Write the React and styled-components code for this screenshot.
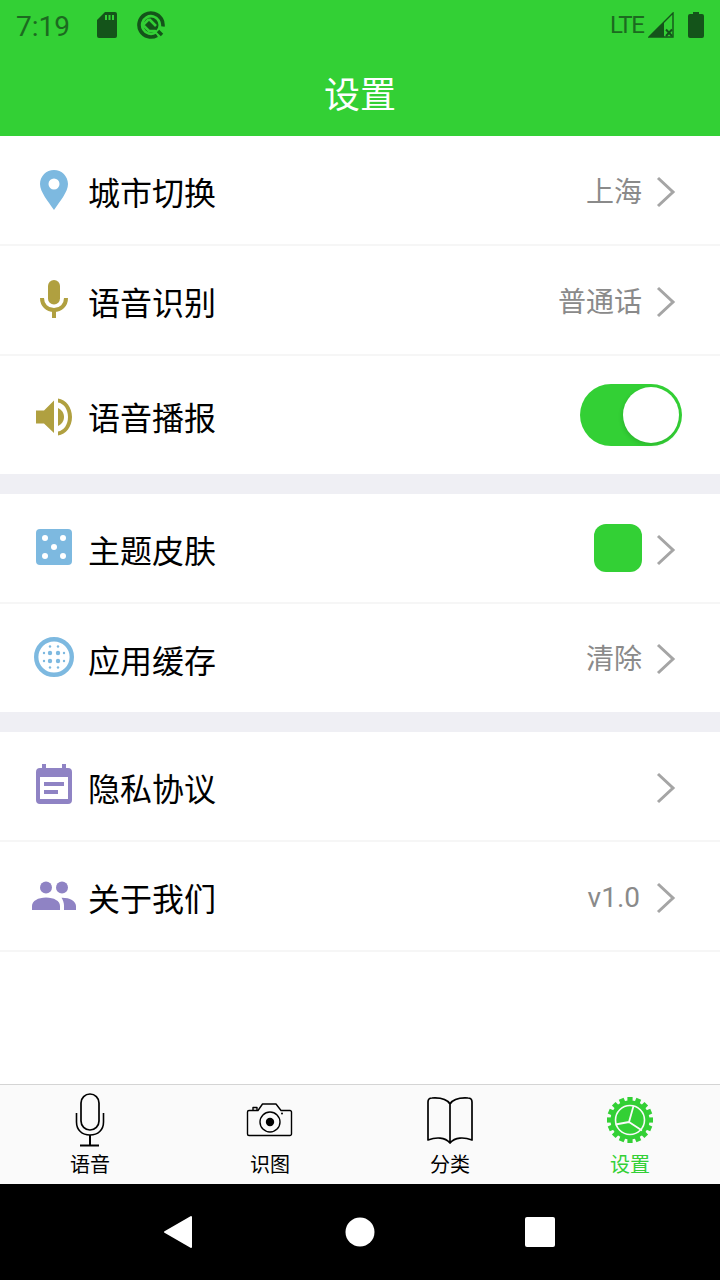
import React from 'react';
import styled, { createGlobalStyle } from 'styled-components';

const GREEN = '#33d035';
const BLUE = '#7db9e0';
const OLIVE = '#b0a040';
const PURPLE = '#8f83c4';
const STATUS = '#14541a';
const CJK = '"Noto Sans CJK SC", "Noto Sans", sans-serif';

const GlobalStyle = createGlobalStyle`
  html, body {
    margin: 0;
    padding: 0;
    background: #fff;
  }
  * {
    box-sizing: border-box;
  }
`;

const Screen = styled.div`
  width: 720px;
  height: 1280px;
  display: flex;
  flex-direction: column;
  background: #fff;
  font-family: ${CJK};
  overflow: hidden;
`;

const StatusBar = styled.div`
  height: 56px;
  flex: none;
  display: flex;
  align-items: center;
  padding: 0 16px;
  background: ${GREEN};
  color: #1c6a20;
`;

const Time = styled.span`
  font-family: Roboto, sans-serif;
  font-size: 28px;
  line-height: 50px;
  width: 81px;
  margin-top: -2px;
`;

const StatusIcon = styled.svg`
  display: block;
  flex: none;
  margin-top: -6px;
  margin-left: ${(p) => p.$left || 0}px;
`;

const Network = styled.span`
  font-family: Roboto, sans-serif;
  font-size: 24px;
  letter-spacing: -1.4px;
  line-height: 50px;
  margin-left: auto;
  margin-top: -6px;
  width: 38px;
`;

const Header = styled.div`
  height: 80px;
  flex: none;
  display: flex;
  align-items: center;
  justify-content: center;
  background: ${GREEN};
  color: #fff;
  font-size: 36px;
  padding-bottom: 9px;
`;

const Content = styled.div`
  flex: 1;
  display: flex;
  flex-direction: column;
`;

const Group = styled.div`
  display: flex;
  flex-direction: column;
`;

const Gap = styled.div`
  height: 20px;
  background: #efeff4;
`;

const Row = styled.div`
  height: ${(p) => p.$height || 110}px;
  display: flex;
  align-items: center;
  padding: 0 44px 0 32px;
  border-bottom: 2px solid ${(p) => (p.$plain ? 'transparent' : '#f6f6f6')};
`;

const IconSlot = styled.div`
  width: 44px;
  flex: none;
  display: flex;
  justify-content: center;
  margin-top: ${(p) => p.$shift || 0}px;

  svg {
    display: block;
  }
`;

const Label = styled.span`
  margin-left: 12px;
  font-size: 32px;
  line-height: 44px;
  color: #000;
  padding-top: ${(p) => p.$drop ?? 2}px;
`;

const Side = styled.div`
  margin-left: auto;
  display: flex;
  align-items: center;
`;

const Value = styled.span`
  font-family: ${(p) => (p.$latin ? 'Roboto, sans-serif' : CJK)};
  font-size: 28px;
  line-height: 40px;
  color: #8a8a8a;
  margin-right: ${(p) => (p.$latin ? 2 : 0)}px;
  margin-top: ${(p) => (p.$latin ? 4 : 0)}px;
`;

const Chevron = styled.svg`
  display: block;
  margin-left: 14px;
  margin-top: 4px;
`;

const Swatch = styled.div`
  width: 48px;
  height: 48px;
  border-radius: 12px;
  background: ${GREEN};
`;

const Toggle = styled.div`
  width: 102px;
  height: 62px;
  margin-right: -6px;
  margin-top: 2px;
  padding: 3px;
  display: flex;
  justify-content: flex-end;
  border-radius: 31px;
  background: ${GREEN};
`;

const Knob = styled.div`
  width: 56px;
  height: 56px;
  border-radius: 50%;
  background: #fff;
  box-shadow: -1px 2px 4px rgba(0, 0, 0, 0.12);
`;

const TabBar = styled.div`
  height: 100px;
  flex: none;
  display: grid;
  grid-template-columns: repeat(4, 1fr);
  background: #fafafa;
  border-top: 1px solid #d4d4d4;
`;

const Tab = styled.div`
  display: flex;
  flex-direction: column;
  align-items: center;
  color: ${(p) => (p.$active ? GREEN : '#000')};
`;

const TabIcon = styled.svg`
  display: block;
  width: 60px;
  height: 65px;
  flex: none;
`;

const TabLabel = styled.span`
  font-size: 20px;
  line-height: 28px;
`;

const NavBar = styled.div`
  height: 96px;
  flex: none;
  background: #000;
  display: flex;
  align-items: center;
  justify-content: center;
  gap: 150px;
`;

const NavIcon = styled.svg`
  display: block;
  overflow: visible;
`;

const ArrowRight = () => (
  <Chevron width="20" height="32" viewBox="0 0 20 32">
    <path d="M2 2 L17 16 L2 30" fill="none" stroke="#a5a5a5" strokeWidth="3" />
  </Chevron>
);

const SdCard = () => (
  <StatusIcon $left={0} width="20" height="26" viewBox="0 0 20 26">
    <path
      fill={STATUS}
      fillRule="evenodd"
      d="M8 0 H18 a2 2 0 0 1 2 2 V24 a2 2 0 0 1 -2 2 H2 a2 2 0 0 1 -2 -2 V8 Z M8 3 V8 H10 V3 Z M11.5 3 V8 H13.5 V3 Z M15 3 V8 H17 V3 Z"
    />
  </StatusIcon>
);

const QLogo = () => (
  <StatusIcon $left={20} width="28" height="28" viewBox="0 0 28 28">
    <circle cx="14" cy="14" r="12" fill="none" stroke={STATUS} strokeWidth="3.6" strokeDasharray="64 11.4" transform="rotate(60 14 14)" />
    <circle cx="14" cy="14" r="7.5" fill={STATUS} />
    <path d="M12 8 L6 14 L12 20 L18 20 L24 26 M12 8 L19 15" fill="none" stroke={GREEN} strokeWidth="2.6" />
    <path d="M21 20 L25 24" stroke={STATUS} strokeWidth="3.4" />
  </StatusIcon>
);

const Signal = () => (
  <StatusIcon $left={0} width="26" height="26" viewBox="0 0 26 26">
    <path d="M25 1 V25 H1 Z" fill="none" stroke={STATUS} strokeWidth="1.4" />
    <path d="M1 25 L16 10 V25 Z" fill={STATUS} />
    <path d="M18 17.5 L24 24 M24 17.5 L18 24" stroke={STATUS} strokeWidth="2" />
  </StatusIcon>
);

const Battery = () => (
  <StatusIcon $left={14} width="16" height="26" viewBox="0 0 16 26">
    <path fill={STATUS} d="M5 0 H11 V2 H14 a2 2 0 0 1 2 2 V24 a2 2 0 0 1 -2 2 H2 a2 2 0 0 1 -2 -2 V4 a2 2 0 0 1 2 -2 H5 Z" />
  </StatusIcon>
);

const PinIcon = () => (
  <svg width="28" height="40" viewBox="0 0 28 40">
    <path
      fill={BLUE}
      fillRule="evenodd"
      d="M14 0 C6.3 0 0 6.2 0 14 C0 22 8 31 14 40 C20 31 28 22 28 14 C28 6.2 21.7 0 14 0 Z M14 8.5 a5.5 5.5 0 1 1 0 11 a5.5 5.5 0 1 1 0 -11 Z"
    />
  </svg>
);

const MicIcon = () => (
  <svg width="28" height="38" viewBox="0 0 28 38">
    <rect x="8" y="0" width="12" height="24.5" rx="6" fill={OLIVE} />
    <path d="M2 18 C2 25 7 30 14 30 C21 30 26 25 26 18" fill="none" stroke={OLIVE} strokeWidth="4" />
    <rect x="12" y="29" width="4" height="9" fill={OLIVE} />
  </svg>
);

const SpeakerIcon = () => (
  <svg width="36" height="38" viewBox="0 0 36 38">
    <path fill={OLIVE} d="M0 12.5 H8 L18 2.5 V35 L8 25.5 H0 Z" />
    <path fill={OLIVE} d="M22 0.5 C30 1.5 36 9.5 36 19 C36 28.5 30 36.5 22 37.5 V33.5 C28 32.5 32 26.5 32 19 C32 11.5 28 5.5 22 4.5 Z" />
    <path fill={OLIVE} d="M22 10 C25.5 11.5 28 15 28 19 C28 23 25.5 26.5 22 28 Z" />
  </svg>
);

const DiceIcon = () => (
  <svg width="36" height="36" viewBox="0 0 36 36">
    <rect width="36" height="36" rx="4" fill={BLUE} />
    {[[9, 9], [27, 9], [18, 18], [9, 27], [27, 27]].map(([x, y]) => (
      <circle key={`${x}-${y}`} cx={x} cy={y} r="3" fill="#fff" />
    ))}
  </svg>
);

const CacheIcon = () => (
  <svg width="40" height="40" viewBox="0 0 40 40">
    <circle cx="20" cy="20" r="17.8" fill="none" stroke={BLUE} strokeWidth="4.4" />
    {[[16, 16], [24, 16], [16, 24], [24, 24]].map(([x, y]) => (
      <circle key={`${x}-${y}`} cx={x} cy={y} r="2.2" fill={BLUE} />
    ))}
    {[[16, 9.5], [24, 9.5], [16, 30.5], [24, 30.5], [10, 16], [10, 24], [30, 16], [30, 24]].map(([x, y]) => (
      <circle key={`${x}-${y}`} cx={x} cy={y} r="1.2" fill={BLUE} />
    ))}
  </svg>
);

const CalendarIcon = () => (
  <svg width="36" height="40" viewBox="0 0 36 40">
    <path
      fill={PURPLE}
      fillRule="evenodd"
      d="M6 0 H10 V4 H26 V0 H30 V4 H32 a4 4 0 0 1 4 4 V36 a4 4 0 0 1 -4 4 H4 a4 4 0 0 1 -4 -4 V8 a4 4 0 0 1 4 -4 H6 Z M4 13 V35 H32 V13 Z"
    />
    <rect x="8" y="18" width="20" height="4" fill={PURPLE} />
    <rect x="8" y="26" width="14" height="4" fill={PURPLE} />
  </svg>
);

const PeopleIcon = () => (
  <svg width="44" height="30" viewBox="0 0 44 30">
    <circle cx="14" cy="6.5" r="6" fill={PURPLE} />
    <circle cx="30" cy="6.5" r="6" fill={PURPLE} />
    <path fill={PURPLE} d="M0 29 V25 C0 20 6 16.5 14 16.5 C22 16.5 28 20 28 25 V29 Z" />
    <path fill={PURPLE} d="M29.5 16.7 C37.5 16.5 44 20 44 25 V29 H32 V24.5 C32 21.5 31 19 29.5 16.7 Z" />
  </svg>
);

const TabMic = () => (
  <TabIcon viewBox="0 0 60 65">
    <g fill="none" stroke="currentColor" strokeWidth="2">
      <rect x="21" y="9" width="18" height="36" rx="9" strokeWidth="1.7" />
      <path d="M16.5 28 V37 C16.5 45 22 50 30 50 C38 50 43.5 45 43.5 37 V28" strokeWidth="1.6" />
      <path d="M30 50 V60 M20 60.5 H39" />
    </g>
  </TabIcon>
);

const TabCamera = () => (
  <TabIcon viewBox="0 0 60 65">
    <g fill="none" stroke="currentColor" strokeWidth="1.4" strokeLinejoin="round">
      <path d="M9 25.5 H18 L22.5 19 H36 L41 25.5 H50 a1.5 1.5 0 0 1 1.5 1.5 V49 a1.5 1.5 0 0 1 -1.5 1.5 H9 a1.5 1.5 0 0 1 -1.5 -1.5 V27 a1.5 1.5 0 0 1 1.5 -1.5 Z" />
      <circle cx="30" cy="37" r="10" />
      <path d="M13 25 V22.5 H17 V25" />
    </g>
    <circle cx="30" cy="37" r="4.2" fill="currentColor" />
    <circle cx="42" cy="28.5" r="1" fill="currentColor" />
  </TabIcon>
);

const TabBook = () => (
  <TabIcon viewBox="0 0 60 65">
    <path
      d="M30 19 C27 14 20 12.5 12 13 C9 13 8 14.5 8 17 V55 C16 52 25 52 30 58 C35 52 44 52 52 55 V17 C52 14.5 51 13 48 13 C40 12.5 33 14 30 19 Z M30 19 V57"
      fill="none"
      stroke="currentColor"
      strokeWidth="1.7"
      strokeLinejoin="round"
    />
  </TabIcon>
);

// gear teeth are spaced evenly round the wheel
const TEETH = Array.from({ length: 16 }, (_, i) => i * 22.5);

const TabGear = () => (
  <TabIcon viewBox="0 0 60 65">
    <g transform="translate(30 35)">
      <circle r="19.5" fill="currentColor" />
      {TEETH.map((a) => (
        <rect key={a} x="-2.6" y="-23" width="5.2" height="6" fill="currentColor" transform={`rotate(${a})`} />
      ))}
      <circle r="14.5" fill="none" stroke="#fafafa" strokeWidth="1.6" />
      <path d="M-1 2 L3.5 -14 M-1 2 L-14.5 4.5 M-1 2 L12 10.5" fill="none" stroke="#fafafa" strokeWidth="1.8" />
    </g>
  </TabIcon>
);

const NAV_TABS = [
  { label: '语音', icon: <TabMic /> },
  { label: '识图', icon: <TabCamera /> },
  { label: '分类', icon: <TabBook /> },
  { label: '设置', icon: <TabGear />, active: true },
];

export default function App() {
  return (
    <Screen>
      <GlobalStyle />
      <StatusBar>
        <Time>7:19</Time>
        <SdCard />
        <QLogo />
        <Network>LTE</Network>
        <Signal />
        <Battery />
      </StatusBar>
      <Header>设置</Header>

      <Content>
        <Group>
          <Row>
            <IconSlot><PinIcon /></IconSlot>
            <Label>城市切换</Label>
            <Side>
              <Value>上海</Value>
              <ArrowRight />
            </Side>
          </Row>
          <Row>
            <IconSlot $shift={-2}><MicIcon /></IconSlot>
            <Label>语音识别</Label>
            <Side>
              <Value>普通话</Value>
              <ArrowRight />
            </Side>
          </Row>
          <Row $height={118} $plain>
            <IconSlot $shift={6}><SpeakerIcon /></IconSlot>
            <Label $drop={4}>语音播报</Label>
            <Side>
              <Toggle>
                <Knob />
              </Toggle>
            </Side>
          </Row>
        </Group>
        <Gap />
        <Group>
          <Row>
            <IconSlot $shift={-2}><DiceIcon /></IconSlot>
            <Label $drop={2}>主题皮肤</Label>
            <Side>
              <Swatch />
              <ArrowRight />
            </Side>
          </Row>
          <Row $height={108} $plain>
            <IconSlot><CacheIcon /></IconSlot>
            <Label $drop={4}>应用缓存</Label>
            <Side>
              <Value>清除</Value>
              <ArrowRight />
            </Side>
          </Row>
        </Group>
        <Gap />
        <Group>
          <Row>
            <IconSlot $shift={-4}><CalendarIcon /></IconSlot>
            <Label>隐私协议</Label>
            <Side>
              <ArrowRight />
            </Side>
          </Row>
          <Row>
            <IconSlot><PeopleIcon /></IconSlot>
            <Label>关于我们</Label>
            <Side>
              <Value $latin>v1.0</Value>
              <ArrowRight />
            </Side>
          </Row>
        </Group>
      </Content>

      <TabBar>
        {NAV_TABS.map((tab) => (
          <Tab key={tab.label} $active={tab.active}>
            {tab.icon}
            <TabLabel>{tab.label}</TabLabel>
          </Tab>
        ))}
      </TabBar>

      <NavBar>
        <NavIcon width="30" height="34" viewBox="0 0 30 34">
          <path d="M26 2 V32 L0 17 Z" fill="#fff" stroke="#fff" strokeWidth="2" strokeLinejoin="round" />
        </NavIcon>
        <NavIcon width="30" height="30" viewBox="0 0 30 30">
          <circle cx="15" cy="15" r="14.5" fill="#fff" />
        </NavIcon>
        <NavIcon width="30" height="30" viewBox="0 0 30 30">
          <rect width="30" height="30" rx="2" fill="#fff" />
        </NavIcon>
      </NavBar>
    </Screen>
  );
}
